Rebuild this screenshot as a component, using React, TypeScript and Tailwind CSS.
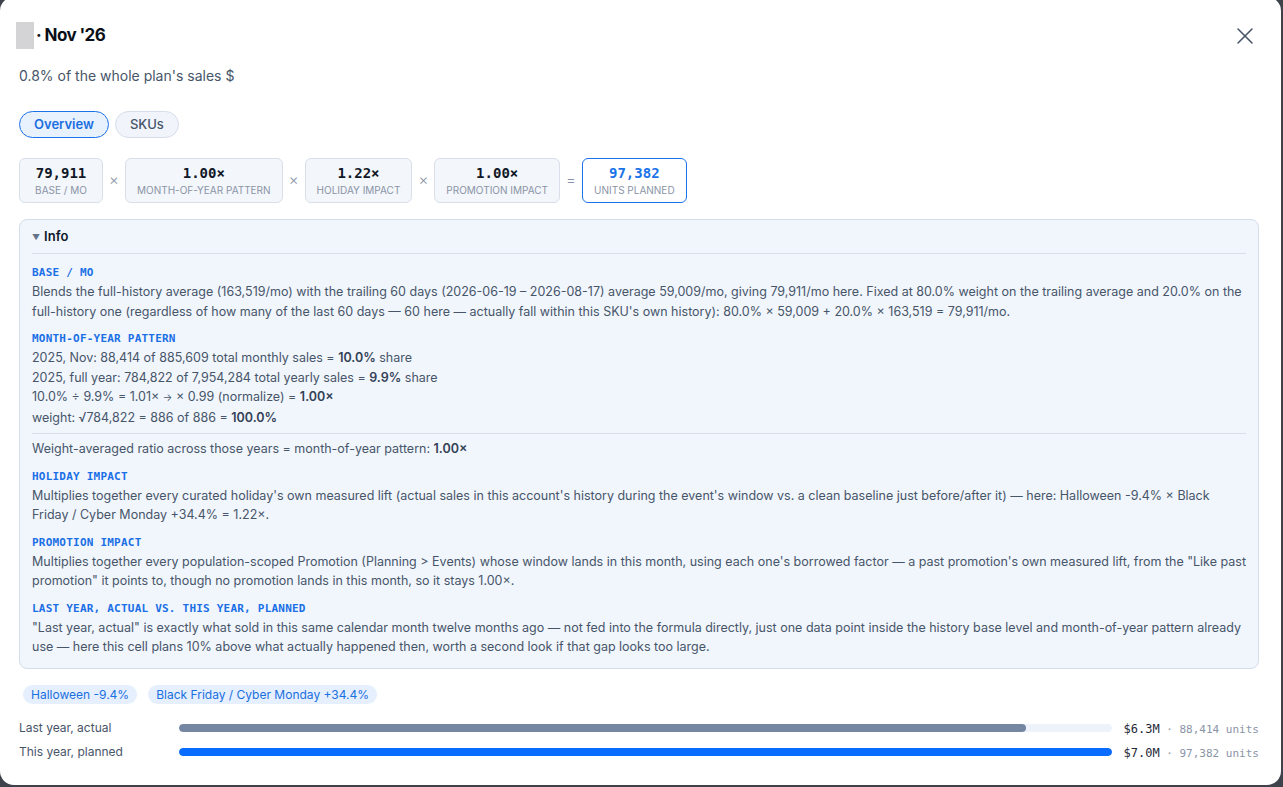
import { X } from 'lucide-react'

type Factor = {
  value: string
  label: string
  total?: boolean
}

const factors: Factor[] = [
  { value: '79,911', label: 'Base / mo' },
  { value: '1.00×', label: 'Month-of-year pattern' },
  { value: '1.22×', label: 'Holiday impact' },
  { value: '1.00×', label: 'Promotion impact' },
  { value: '97,382', label: 'Units planned', total: true },
]

const mono = "font-['DejaVu_Sans_Mono',monospace]"

function FactorBox({ f }: { f: Factor }) {
  return (
    <div
      className={`min-w-[84px] rounded-[6px] border px-[11px] py-[5px] text-center ${
        f.total ? 'border-[#1a73e8] bg-white' : 'border-[#d8dfe9] bg-[#f3f6fb]'
      }`}
    >
      <div
        className={`${mono} text-[14px] leading-[19px] font-bold ${
          f.total ? 'text-[#1a73e8]' : 'text-[#111827]'
        }`}
      >
        {f.value}
      </div>
      <div className="text-[10px] leading-[14px] uppercase text-[#8a94a6]">{f.label}</div>
    </div>
  )
}

function Op({ children }: { children: string }) {
  return <span className="w-[10px] text-center text-[15px] font-light text-[#8a94a6]">{children}</span>
}

function Heading({ children }: { children: string }) {
  return (
    <div className={`${mono} mb-[1px] text-[11px] leading-4 font-bold tracking-[0.02em] uppercase text-[#1a6fe5]`}>
      {children}
    </div>
  )
}

function B({ children }: { children: string }) {
  return <span className="font-semibold text-[#334155]">{children}</span>
}

function CompareRow({
  label,
  pct,
  fill,
  money,
  units,
}: {
  label: string
  pct: number
  fill: string
  money: string
  units: string
}) {
  return (
    <div className="flex h-4 items-center gap-3">
      <div className="w-[148px] text-[12px] text-[#475569]">{label}</div>
      <div className="h-2 flex-1 overflow-hidden rounded-full bg-[#eef3fb]">
        <div className={`h-full rounded-full ${fill}`} style={{ width: `${pct}%` }} />
      </div>
      <div className={`${mono} whitespace-nowrap`}>
        <span className="text-[12px] text-[#1f2937]">{money}</span>
        <span className="text-[11px] text-[#8a94a6]"> · {units} units</span>
      </div>
    </div>
  )
}

export default function App() {
  const lastYear = 88414
  const planned = 97382

  return (
    <div className="h-[787px] w-full overflow-hidden bg-[#3d424b] font-['Inter',sans-serif]">
      <div className="-mt-[3px] h-[788px] w-[1281px] rounded-[14px] bg-white pt-[25px] pr-[22px] pl-[19px]">

        {/* header */}
        <div className="flex h-[27px] items-center justify-between">
          <div className="flex items-center gap-[2px]">
            <div className="-ml-[3px] h-[27px] w-[18px] bg-[#d4d4d6]" />
            <h2 className="text-[17px] font-bold tracking-[-0.035em] text-[#0b0f19]">· Nov '26</h2>
          </div>
          <button className="flex h-[27px] items-center text-[#475569]">
            <X size={28} strokeWidth={1.3} />
          </button>
        </div>

        <p className="mt-[17px] text-[14px] leading-5 text-[#475569]">0.8% of the whole plan's sales $</p>

        {/* tabs */}
        <div className="mt-[25px] flex gap-[6px]">
          <button className="rounded-full border border-[#1a73e8] bg-[#e8f1fe] px-[14px] py-[4px] text-[13px] leading-[17px] font-semibold text-[#1a6fe0]">
            Overview
          </button>
          <button className="rounded-full border border-[#d6dde8] bg-[#f1f5fb] px-[14px] py-[4px] text-[13px] leading-[17px] font-medium text-[#475569]">
            SKUs
          </button>
        </div>

        {/* formula */}
        <div className="mt-[20px] flex items-center gap-[6px]">
          {factors.map((f, i) => (
            <div key={f.label} className="flex items-center gap-[6px]">
              {i > 0 && <Op>{i === factors.length - 1 ? '=' : '×'}</Op>}
              <FactorBox f={f} />
            </div>
          ))}
        </div>

        {/* info */}
        <div className="mt-[16px] rounded-[8px] border border-[#d5dde8] bg-[#f1f6fd]">
          <div className="mx-3 flex items-center gap-[4px] border-b border-[#d8dfe9] py-[8px]">
            <span className="text-[8px] text-[#64748b]">▼</span>
            <span className="text-[13px] leading-[17px] font-semibold text-[#0f172a]">Info</span>
          </div>

          <div className="px-3 pt-[11px] pb-[11px] text-[12.5px] leading-[19.5px] text-[#475569]">
            <Heading>Base / mo</Heading>
            <p>
              Blends the full-history average (163,519/mo) with the trailing 60 days (2026-06-19 – 2026-08-17) average
              59,009/mo, giving 79,911/mo here. Fixed at 80.0% weight on the trailing average and 20.0% on the
              full-history one (regardless of how many of the last 60 days — 60 here — actually fall within this SKU's
              own history): 80.0% × 59,009 + 20.0% × 163,519 = 79,911/mo.
            </p>

            <div className="mt-[10px]">
              <Heading>Month-of-year pattern</Heading>
              <p>
                2025, Nov: 88,414 of 885,609 total monthly sales = <B>10.0%</B> share
              </p>
              <p>
                2025, full year: 784,822 of 7,954,284 total yearly sales = <B>9.9%</B> share
              </p>
              <p>
                10.0% ÷ 9.9% = 1.01× <span className="text-[10px]">→</span> × 0.99 (normalize) = <B>1.00×</B>
              </p>
              <p>
                weight: √784,822 = 886 of 886 = <B>100.0%</B>
              </p>
            </div>

            <div className="mt-[6px] border-t border-[#d8dfe9] pt-[5px]">
              Weight-averaged ratio across those years = month-of-year pattern: <B>1.00×</B>
            </div>

            <div className="mt-[10px]">
              <Heading>Holiday impact</Heading>
              <p>
                Multiplies together every curated holiday's own measured lift (actual sales in this account's history
                during the event's window vs. a clean baseline just before/after it) — here: Halloween -9.4% × Black
                Friday / Cyber Monday +34.4% = 1.22×.
              </p>
            </div>

            <div className="mt-[10px]">
              <Heading>Promotion impact</Heading>
              <p>
                Multiplies together every population-scoped Promotion (Planning &gt; Events) whose window lands in this
                month, using each one's borrowed factor — a past promotion's own measured lift, from the "Like past
                promotion" it points to, though no promotion lands in this month, so it stays 1.00×.
              </p>
            </div>

            <div className="mt-[10px]">
              <Heading>Last year, actual vs. this year, planned</Heading>
              <p>
                "Last year, actual" is exactly what sold in this same calendar month twelve months ago — not fed into
                the formula directly, just one data point inside the history base level and month-of-year pattern
                already use — here this cell plans 10% above what actually happened then, worth a second look if that
                gap looks too large.
              </p>
            </div>
          </div>
        </div>

        {/* holiday chips */}
        <div className="mt-[16px] flex gap-[11px] pl-[4px]">
          <span className="rounded-full bg-[#e5effd] px-2 text-[12px] leading-[19px] text-[#1a6fe0]">Halloween -9.4%</span>
          <span className="rounded-full bg-[#e5effd] px-2 text-[12px] leading-[19px] text-[#1a6fe0]">
            Black Friday / Cyber Monday +34.4%
          </span>
        </div>

        {/* last year vs planned */}
        <div className="mt-[16px] flex flex-col gap-2">
          <CompareRow
            label="Last year, actual"
            pct={(lastYear / planned) * 100}
            fill="bg-[#7586a3]"
            money="$6.3M"
            units="88,414"
          />
          <CompareRow label="This year, planned" pct={100} fill="bg-[#0a6cff]" money="$7.0M" units="97,382" />
        </div>
      </div>
    </div>
  )
}
